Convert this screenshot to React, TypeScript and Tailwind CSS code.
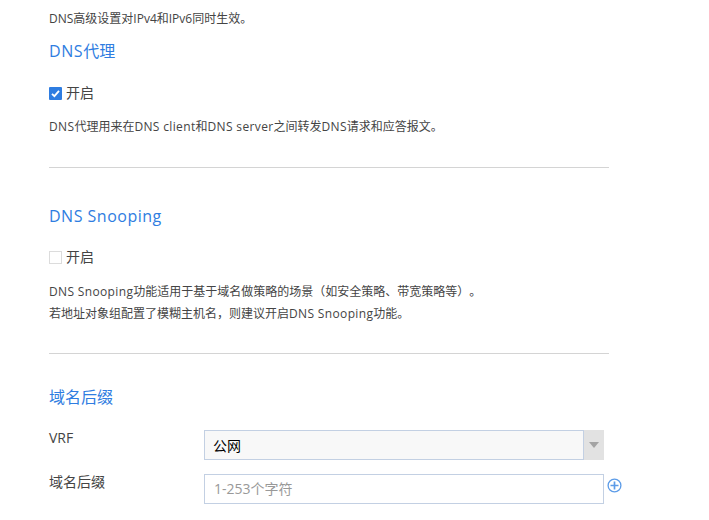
const font = { fontFamily: '"Open Sans", "Noto Sans CJK SC", sans-serif' }

function Latin({ children }: { children: string }) {
    return <span className="tracking-[0.35px]">{children}</span>
}

function Check({ checked }: { checked: boolean }) {
    return (
        <div className="flex items-center h-[20px]">
            {checked ? (
                <span className="w-[13px] h-[13px] rounded-[1px] bg-[#2f7de1] flex items-center justify-center">
                    <svg width="11" height="11" viewBox="0 0 11 11" fill="none">
                        <path d="M2 5.8 L4.4 8.2 L9 2.8" stroke="#fff" strokeWidth="1.8" />
                    </svg>
                </span>
            ) : (
                <span className="w-[13px] h-[13px] border border-[#dcdcdc] bg-white" />
            )}
            <span className="ml-[4px] pb-[2px] text-[14px] text-[#444]">开启</span>
        </div>
    )
}

export default function App() {
    return (
        <div className="w-[709px] h-[520px] overflow-hidden bg-white pl-[49px] text-[12px] text-[#444] [text-spacing-trim:space-all]" style={font}>
            <div className="w-[560px]">
                <p className="pt-[10px] h-[32px] leading-[18px]">DNS高级设置对IPv4和IPv6同时生效。</p>

                {/* DNS proxy */}
                <h2 className="mt-[7px] h-[24px] leading-[24px] text-[16px] text-[#2f7de1]"><span className="tracking-[0.6px]">DNS</span>代理</h2>
                <div className="mt-[20px]"><Check checked /></div>
                <p className="mt-[15px] leading-[18px]">
                    <Latin>DNS</Latin>代理用来在<Latin>DNS client</Latin>和<Latin>DNS server</Latin>之间转发<Latin>DNS</Latin>请求和应答报文。
                </p>
                <div className="mt-[31px] border-t border-[#d4d4d4]" />

                {/* DNS snooping */}
                <h2 className="mt-[36px] h-[24px] leading-[24px] text-[16px] text-[#2f7de1] tracking-[0.5px]">DNS Snooping</h2>
                <div className="mt-[19px]"><Check checked={false} /></div>
                <p className="mt-[14px] leading-[22px]">
                    <Latin>DNS Snooping</Latin>功能适用于基于域名做策略的场景（如安全策略、带宽策略等）。<br />
                    若地址对象组配置了模糊主机名，则建议开启<Latin>DNS Snooping</Latin>功能。
                </p>
                <div className="mt-[28px] border-t border-[#d4d4d4]" />

                {/* Domain suffix */}
                <h2 className="mt-[31px] h-[24px] leading-[24px] text-[16px] text-[#2f7de1]">域名后缀</h2>

                <div className="mt-[21px] flex items-start">
                    <label className="w-[155px] shrink-0 text-[14px] leading-[16px]">VRF</label>
                    <div className="w-[400px] shrink-0 h-[30px] flex">
                        <div className="flex-1 border border-[#c3d0e3] bg-[#f8f8f8] pl-[8px] text-[14px] text-black leading-[29px]">公网</div>
                        <div className="w-[20px] bg-[#e2e2e2] flex items-center justify-center">
                            <svg width="10" height="6" viewBox="0 0 10 6"><path d="M0 0 H10 L5 6 Z" fill="#a3a3a3" /></svg>
                        </div>
                    </div>
                </div>

                <div className="mt-[14px] flex items-start">
                    <label className="w-[155px] shrink-0 text-[14px] leading-[16px]">域名后缀</label>
                    <input
                        placeholder="1-253个字符"
                        className="w-[400px] shrink-0 h-[30px] border border-[#c3d0e3] pl-[9px] pb-[1px] text-[14px] outline-none placeholder:text-[#999]"
                    />
                    <svg className="ml-[3px] mt-[4px] shrink-0" width="15" height="15" viewBox="0 0 15 15" fill="none" stroke="#5b9be8">
                        <circle cx="7.5" cy="7.5" r="6.4" strokeWidth="1.3" />
                        <path d="M3.5 7.5 H11.5 M7.5 3.5 V11.5" strokeWidth="1.7" />
                    </svg>
                </div>
            </div>
        </div>
    )
}
